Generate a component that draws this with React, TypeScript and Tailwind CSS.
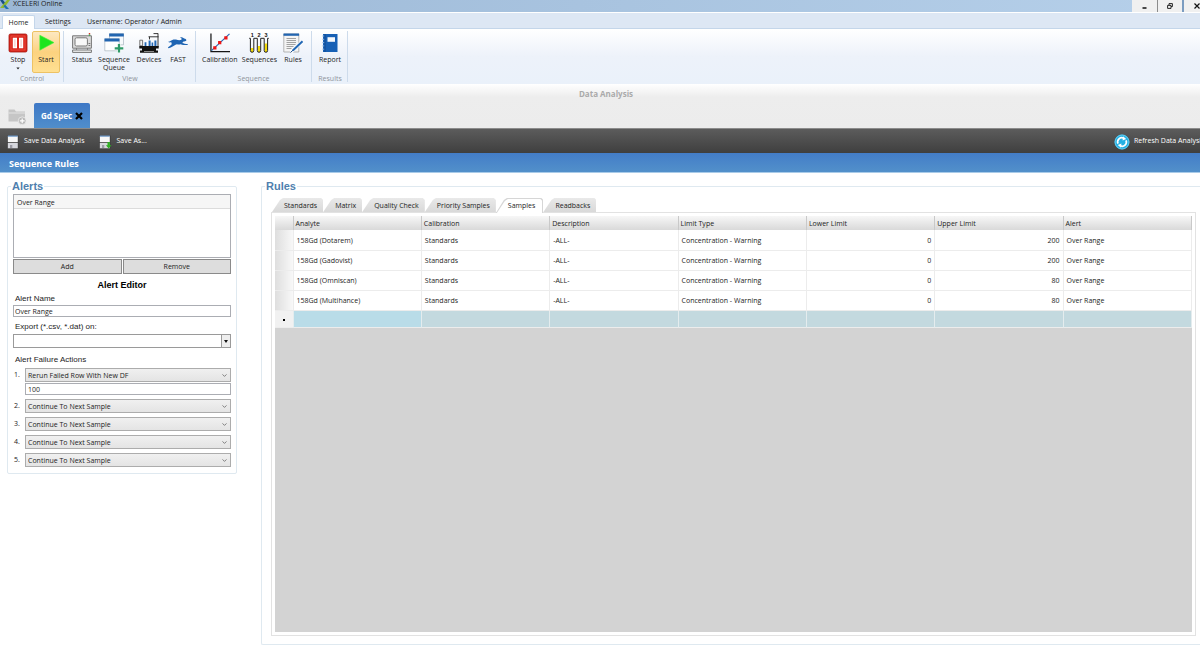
import { type ReactNode } from 'react';
import { clsx } from 'clsx';

const rules = [
  { analyte: '158Gd (Dotarem)', lower: 0, upper: 200 },
  { analyte: '158Gd (Gadovist)', lower: 0, upper: 200 },
  { analyte: '158Gd (Omniscan)', lower: 0, upper: 80 },
  { analyte: '158Gd (Multihance)', lower: 0, upper: 80 },
];

const columns = ['Analyte', 'Calibration', 'Description', 'Limit Type', 'Lower Limit', 'Upper Limit', 'Alert'];

const tabs = ['Standards', 'Matrix', 'Quality Check', 'Priority Samples', 'Samples', 'Readbacks'];

/* ---------- Icons ---------- */

const StopIcon = () => (
  <svg viewBox="0 0 20 20" className="w-5 h-5">
    <rect x="1" y="1" width="18" height="18" rx="1.5" fill="#d9261c" stroke="#a3160f" strokeWidth="0.8" />
    <path d="M3 3h14v14H3z" fill="none" stroke="#ee5346" strokeWidth="0.7" />
    <path d="M4.8 4.8h4.2v10.4H4.8zM11 4.8h4.2v10.4H11z" fill="#fff" />
    <path d="M6.3 6.2h1.2v7.6H6.3zM12.5 6.2h1.2v7.6h-1.2z" fill="#f3cdc9" />
  </svg>
);

const StartIcon = () => (
  <svg viewBox="0 0 20 20" className="w-5 h-5">
    <path d="M3.8 2.2 18 9.6 3.8 17.2Z" fill="#1ee51e" stroke="#4df03f" strokeWidth="0.6" />
  </svg>
);

const StatusIcon = () => (
  <svg viewBox="0 0 20 20" className="w-5 h-5" fill="none" stroke="#777" strokeWidth="1">
    <path d="M0.6 2.8h18.8v12.4H0.6z" fill="#dcdcdc" />
    <rect x="3" y="4.8" width="12.4" height="8.2" rx="1.5" fill="#f8f8f8" />
    <path d="M16.5 12.5h1.8M16.5 10.5h1.8" />
    <path d="M4.5 15.2v1.6M15.5 15.2v1.6M0.6 17h18.8v2.4H0.6z" fill="#eee" />
    <path d="M17.5 0v1.4" stroke="#e03428" strokeWidth="1.4" />
    <path d="M17.5 1.4v1.4" stroke="#35a84a" strokeWidth="1.4" />
  </svg>
);

const QueueIcon = () => (
  <svg viewBox="0 0 20 20" className="w-5 h-5">
    <path d="M5.5 0.8h14v11h-14z" fill="#f6f9fc" stroke="#9aa7b5" strokeWidth="0.6" />
    <path d="M5.2 0.5h14.6v3H5.2z" fill="#2265b0" />
    <path d="M0.8 5.8h14.4v12H0.8z" fill="#fff" stroke="#9aa7b5" strokeWidth="0.6" />
    <path d="M0.5 5.5h15v3h-15z" fill="#2265b0" />
    <path d="M15 11v8.6M10.7 15.3h8.6" stroke="#fff" strokeWidth="3.8" />
    <path d="M15 11v8.6M10.7 15.3h8.6" stroke="#2f9a68" strokeWidth="2.3" />
  </svg>
);

const DevicesIcon = () => (
  <svg viewBox="0 0 20 20" className="w-5 h-5">
    <path d="M0.8 7.2h2.8v5.6H0.8z" fill="#f4f4f4" stroke="#555" strokeWidth="0.8" />
    <path d="M19 14V0.4M9.5 3.8h10M10.5 3.8v2.6M14.5 0.6h4.5" fill="none" stroke="#222" strokeWidth="0.9" />
    <path d="M5.6 9.2h1.8v3.8H5.6zM9.6 7.5h2v5.5h-2zM12.6 9.5h1.6v3.5h-1.6zM15.4 7.5h2v5.5h-2z" fill="#2368b5" />
    <path d="M0.3 13h19.4v2.6H0.3zM3 15.6h14v1.8H3zM1 17.4h18v2.4H1z" fill="#111" />
    <path d="M5 18h10v0.8H5z" fill="#aaa" />
  </svg>
);

const FastIcon = () => (
  <svg viewBox="0 0 20 20" className="w-5 h-5">
    <path
      d="M0 8.8c1 .1 1.7-.1 2.4-.7C4 6.6 6 6.1 8 6.6c1.5.4 3 .8 4.7.5.5-.5.9-.9 1.3-1.2L12 4.3c1.6-.1 3.1.3 4.2 1.3 1.2.1 2 .8 2.2 1.8-.8.8-1.9 1-3 1.1-.3.6-.7 1.1-1.2 1.5 1.6.5 3.2 1 5.6 1 .1.6-.3 1-1 1.1-2.2.1-4.4-.1-6.4-.8-1.2.3-2.3.2-3.5 0-.9.3-1.7.7-2.6 1.1-1.6.8-3.3 2.1-6 2.8l-.3-.9c1.7-1 2.7-2.2 3.9-3.4-.6-.6-.7-1.1-.6-1.8C2.3 9.7 1 9.6 0 8.8Z"
      fill="#1f65b3"
    />
  </svg>
);

const CalibrationIcon = () => (
  <svg viewBox="0 0 21 20" className="w-5 h-5">
    <path d="M1 0v19h20" fill="none" stroke="#151515" strokeWidth="1.3" />
    <path d="M1.5 18 20.5 0.5" stroke="#2368b5" strokeWidth="1.2" />
    <path d="M3.4 13.3h3.4v3.4H3.4zM8.5 8h3.4v3.4H8.5zM15 3h3.4v3.4H15z" fill="#f01616" />
  </svg>
);

const SequencesIcon = () => (
  <svg viewBox="0 0 20 20" className="w-5 h-5">
    <g fontFamily="Liberation Sans, sans-serif" fontWeight="bold" fontSize="5.5" fill="#111" textAnchor="middle">
      <text x="3.2" y="4">1</text>
      <text x="10" y="4">2</text>
      <text x="17" y="4">3</text>
    </g>
    <path d="M1.8 15h2.6v4H1.8zM8.7 13h2.6v6H8.7zM15.6 10.5h2.6V19h-2.6z" fill="#f2d90a" />
    <g fill="none" stroke="#222" strokeWidth="1">
      <path d="M0.2 5.3h1.2v12.3a1.7 1.7 0 0 0 3.4 0V5.3h3.5v12.3a1.7 1.7 0 0 0 3.4 0V5.3h3.5v12.3a1.7 1.7 0 0 0 3.4 0V5.3h1.2" />
    </g>
  </svg>
);

const RulesIcon = () => (
  <svg viewBox="0 0 20 20" className="w-5 h-5">
    <path d="M0.8 1h15v18h-15z" fill="#f4f4f4" stroke="#999" strokeWidth="0.7" />
    <path d="M0.5 0.5h15.6v2.3H0.5z" fill="#2265b0" />
    <path d="M3.5 5.5h9.5M3.5 7.5h9.5M3.5 9.5h9.5M3.5 11.5h9M3.5 13.5h7M3.5 15.5h5" stroke="#999" strokeWidth="0.9" />
    <path d="M19.3 8.5 9.8 17.3 8 19.3" fill="none" stroke="#fff" strokeWidth="3.4" />
    <path d="M19.5 8.3 9.8 17.4" stroke="#2368b5" strokeWidth="2" />
    <path d="M10 17.2 7.6 19.4" stroke="#174a87" strokeWidth="1" />
  </svg>
);

const ReportIcon = () => (
  <svg viewBox="0 0 20 20" className="w-5 h-5">
    <path d="M3 1h14.5v18H3z" fill="#1760b5" />
    <path d="M5 1v18" stroke="#0d417f" strokeWidth="0.7" />
    <path d="M7.5 4.2h7.5v4.6H7.5z" fill="#f5f8fc" />
    <path d="M2.2 3h2M2.2 6.3h2M2.2 9.6h2M2.2 12.9h2M2.2 16.2h2" stroke="#9cc0e8" strokeWidth="0.9" />
  </svg>
);

const FolderAddIcon = () => (
  <svg viewBox="0 0 20 18" className="w-5 h-4.5">
    <path d="M0.5 1.5h6l1.5 2h9v10h-16.5z" fill="#c6c6c6" />
    <path d="M0.5 5h16.5" stroke="#e8e8e8" strokeWidth="0.9" />
    <circle cx="14.2" cy="12.8" r="3.9" fill="#b9b9b9" stroke="#eee" strokeWidth="0.8" />
    <path d="M14.2 10.4v4.8M11.8 12.8h4.8" stroke="#fff" strokeWidth="1.2" />
  </svg>
);

const SaveIcon = ({ withArrow = false }: { withArrow?: boolean }) => (
  <svg viewBox="0 0 13 14" className="w-3.5 h-3.5">
    <path d="M0.5 0.5h11.6v13H1.4L0.5 12.6z" fill="#3d3d3d" />
    <path d="M1.3 0.8h10v6.4h-10z" fill="#f7f7f7" />
    <path d="M1.3 0.6h10v1h-10z" fill="#4b80bd" />
    <path d="M1.3 8h10v5.3h-10z" fill="#d6d7dd" />
    <path d="M3.5 10h2.3v3H3.5z" fill="#9c9ca6" />
    {withArrow && <path d="M9 7h2.4v3.3h1.6L10.2 13.6 7.4 10.3H9z" fill="#2fae23" />}
  </svg>
);

const RefreshIcon = () => (
  <svg viewBox="0 0 16 16" className="w-4 h-4 shrink-0">
    <circle cx="8" cy="8" r="7.5" fill="#25b0e3" />
    <circle cx="8" cy="8" r="7" fill="none" stroke="#7fd8f5" strokeWidth="0.7" />
    <path d="M4 9.6A4.2 4.2 0 0 1 9.8 4.2M12 6.4A4.2 4.2 0 0 1 6.2 11.8" fill="none" stroke="#fff" strokeWidth="1.7" />
    <path d="M9 2.2 12.2 5 8.6 6.4zM7 13.8 3.8 11 7.4 9.6z" fill="#fff" />
  </svg>
);

/* ---------- Ribbon ---------- */

function RibbonButton({ label, icon, className, active }: { label: string; icon: ReactNode; className: string; active?: boolean }) {
  return (
    <button
      className={clsx(
        'flex flex-col items-center gap-[3px] rounded-xs border pt-px leading-2 h-[42px]',
        active ? 'border-[#edc264] bg-linear-to-b from-[#fde8c0] via-[#fcd27f] to-[#ffe092]' : 'border-transparent',
        className,
      )}
    >
      {icon}
      <span>{label}</span>
      {label === 'Stop' && (
        <svg viewBox="0 0 4 3" className="w-1 h-[3px]">
          <path d="M0.4 0.4h3.2L2 2.4z" fill="#222" />
        </svg>
      )}
    </button>
  );
}

function RibbonGroup({ title, className, children }: { title: string; className?: string; children: ReactNode }) {
  return (
    <div className={clsx('flex flex-col justify-between border-r border-[#cddbeb]', className)}>
      <div className="flex">{children}</div>
      <div className="text-center text-[#8f949b] leading-1.5">{title}</div>
    </div>
  );
}

/* ---------- Alerts ---------- */

function ActionSelect({ index, value }: { index: number; value: string }) {
  return (
    <div className="flex items-center">
      <label htmlFor={`action-${index}`} className="w-[11px] shrink-0">{index}.</label>
      <div className="grid flex-1 items-center">
        <select
          id={`action-${index}`}
          className="col-start-1 row-start-1 appearance-none h-3.5 px-0.5 pt-px leading-3 border border-[#acacac] bg-linear-to-b from-[#f0f0f0] to-[#e4e4e4] outline-none"
        >
          <option>{value}</option>
        </select>
        <svg viewBox="0 0 5 3" className="col-start-1 row-start-1 justify-self-end w-[5px] h-[3px] mr-1 pointer-events-none">
          <path d="M0.5 0.4 2.5 2.4 4.5 0.4" fill="none" stroke="#666" strokeWidth="0.8" />
        </svg>
      </div>
    </div>
  );
}

function AlertsPanel() {
  return (
    <fieldset className="w-[230px] shrink-0 self-start rounded-xs border border-[#dfe9f0] px-[5px] pt-0.5 pb-1.5">
      <legend className="-ml-0.5 px-px leading-3 font-['Liberation_Sans',sans-serif] text-[11px] font-bold text-[#4f7fae]">
        Alerts
      </legend>
      <ul className="h-16 border border-[#abadb3] bg-white">
        <li className="h-3.5 pl-[3px] leading-4 border-b border-[#dcdcdc] bg-[#f6f6f6]">Over Range</li>
      </ul>
      <div className="grid grid-cols-2 gap-px mt-px">
        <button className="h-[15px] pt-px leading-3 border border-[#8a8a8a] bg-[#dddddd]">Add</button>
        <button className="h-[15px] pt-px leading-3 border border-[#8a8a8a] bg-[#dddddd]">Remove</button>
      </div>
      <h2 className="mt-[5px] text-center font-['Liberation_Sans',sans-serif] text-[9px] leading-3 font-bold text-black">Alert Editor</h2>
      <label htmlFor="alert-name" className="block mt-0.5 pl-0.5 font-['Liberation_Sans',sans-serif] text-[8px] leading-3">
        Alert Name
      </label>
      <input id="alert-name" defaultValue="Over Range" className="block w-full h-3 px-px pt-px border border-[#abadb3] bg-white outline-none" />
      <label htmlFor="export-on" className="block mt-1 pb-px pl-0.5 font-['Liberation_Sans',sans-serif] text-[8px] leading-3">
        Export (*.csv, *.dat) on:
      </label>
      <div className="grid items-center">
        <select id="export-on" className="col-start-1 row-start-1 appearance-none h-3.5 border border-[#9a9a9a] bg-white outline-none">
          <option></option>
        </select>
        <span className="col-start-1 row-start-1 justify-self-end flex items-center justify-center w-2.5 h-3.5 border border-[#9a9a9a] bg-[#eeeeee] pointer-events-none">
          <svg viewBox="0 0 4 3" className="w-1 h-[3px]">
            <path d="M0 0h4L2 3z" fill="#111" />
          </svg>
        </span>
      </div>
      <h3 className="mt-1.5 pb-0.5 pl-0.5 font-['Liberation_Sans',sans-serif] text-[8px] leading-3">Alert Failure Actions</h3>
      <div className="flex flex-col gap-1 pl-px">
        <div>
          <ActionSelect index={1} value="Rerun Failed Row With New DF" />
          <div className="pl-[11px] pt-px">
            <input aria-label="Dilution factor" defaultValue="100" className="block w-full h-3 px-0.5 pt-px border border-[#abadb3] bg-white outline-none" />
          </div>
        </div>
        {[2, 3, 4, 5].map((n) => (
          <ActionSelect key={n} index={n} value="Continue To Next Sample" />
        ))}
      </div>
    </fieldset>
  );
}

/* ---------- Rules ---------- */

function RuleTab({ label, selected }: { label: string; selected: boolean }) {
  return (
    <button
      role="tab"
      aria-selected={selected}
      className={clsx(
        'relative pl-3 pr-1.5 leading-4 [clip-path:polygon(0_100%,8px_2px,11px_0,calc(100%-2px)_0,100%_2px,100%_100%)]',
        selected ? 'z-10 h-[15px] -mb-px pr-2 bg-[#d6d6d6]' : 'h-3.5 bg-linear-to-b from-[#e9e9e9] to-[#d9d9d9]',
      )}
    >
      {selected && (
        <span className="absolute inset-x-px top-px bottom-0 bg-white [clip-path:polygon(0_100%,8px_2px,11px_0,calc(100%-2px)_0,100%_2px,100%_100%)]" />
      )}
      <span className="relative">{label}</span>
    </button>
  );
}

function RulesPanel() {
  return (
    <fieldset className="flex flex-1 min-w-0 flex-col rounded-l-xs border border-r-0 border-[#dfe9f0] pl-[9px] pr-1 pt-1.5 pb-2">
      <legend className="-ml-1.5 px-px leading-3 font-['Liberation_Sans',sans-serif] text-[11px] font-bold text-[#4f7fae]">
        Rules
      </legend>
      <div role="tablist" className="flex pl-px">
        {tabs.map((tab) => (
          <RuleTab key={tab} label={tab} selected={tab === 'Samples'} />
        ))}
      </div>
      <div className="flex flex-1 flex-col border border-[#e2e2e2] bg-white p-[3px]">
        <div className="flex-1 bg-[#d3d3d3]">
          <table className="w-full table-fixed border-collapse bg-white">
            <thead>
              <tr className="h-3.5 bg-linear-to-b from-[#f7f7f7] to-[#d9d9d9]">
                <th className="w-[18px] border-r border-[#c9c9c9]" aria-label="Row" />
                {columns.map((column) => (
                  <th key={column} className="border-r border-[#c9c9c9] px-0.5 pt-px text-left font-normal leading-3">
                    {column}
                  </th>
                ))}
              </tr>
            </thead>
            <tbody>
              {rules.map((rule) => (
                <tr key={rule.analyte} className="h-5 border-b border-[#ececec] *:border-r *:border-[#ececec] *:px-[3px] *:pt-0.5">
                  <th className="bg-linear-to-r from-[#dedede] to-[#f8f8f8]" aria-label="Select row" />
                  <td>{rule.analyte}</td>
                  <td>Standards</td>
                  <td>-ALL-</td>
                  <td>Concentration - Warning</td>
                  <td className="text-right">{rule.lower}</td>
                  <td className="text-right">{rule.upper}</td>
                  <td>Over Range</td>
                </tr>
              ))}
              {/* Empty row for a new rule */}
              <tr className="h-[17px] border-b border-[#ececec] bg-[#c3d9df] *:border-r *:border-[#e4ecee]">
                <th className="bg-[#f1f1f1]" aria-label="New row">
                  <span className="block mx-auto mt-0.5 size-0.5 bg-black" />
                </th>
                <td className="bg-[#b9dce8]" />
                {columns.slice(1).map((column) => (
                  <td key={column} />
                ))}
              </tr>
            </tbody>
          </table>
        </div>
      </div>
    </fieldset>
  );
}

/* ---------- Page ---------- */

export default function App() {
  return (
    <div className="flex min-h-screen flex-col overflow-hidden whitespace-nowrap bg-white font-['Open_Sans','Noto_Sans',sans-serif] text-[7px] text-[#1c1c1c]">
      {/* Title bar */}
      <header className="flex h-3 bg-linear-to-r from-[#9bb7d5] to-[#b6d0ea]">
        <svg viewBox="0 0 11 9" className="w-[11px] h-[9px]">
          <path d="M0 0h3l3 4-2 2z" fill="#174f86" />
          <path d="M10 0H7L0 8h4z" fill="#8fb82f" />
          <path d="M5 4.5 9 9H6L3.5 6.2z" fill="#1f6fb0" />
        </svg>
        <h1 className="pl-0.5 text-[7px] leading-2">XCELERI Online</h1>
        <div className="ml-auto flex w-[68px] shrink-0 overflow-hidden bg-[#f0f0f0]">
          <button aria-label="Minimize" className="flex w-[26px] shrink-0 items-center justify-center border-r border-[#8c8c8c]">
            <svg viewBox="0 0 5 6" className="w-[5px] h-1.5"><path d="M0.5 5h4" stroke="#111" strokeWidth="1.5" /></svg>
          </button>
          <button aria-label="Restore" className="flex w-[26px] shrink-0 items-center justify-center border-r-2 border-[#7b9cc0]">
            <svg viewBox="0 0 6 6" className="w-1.5 h-1.5" fill="none" stroke="#111" strokeWidth="0.9">
              <path d="M2 2V0.6h3.4v3H4M0.6 2.4H4v3H0.6z" />
            </svg>
          </button>
          <button aria-label="Close" className="flex w-6 shrink-0 items-center pl-2.5">
            <svg viewBox="0 0 6 6" className="w-1.5 h-1.5"><path d="M0.5 0.5l5 5M5.5 0.5l-5 5" stroke="#111" strokeWidth="1.2" /></svg>
          </button>
        </div>
      </header>

      {/* Ribbon tabs */}
      <nav className="flex h-[17px] items-end border-t border-b border-t-white border-b-[#c4d6ea] bg-[#dde7f4] leading-3">
        <button className="-mb-px ml-0.5 h-3.5 w-[33px] rounded-t-xs border border-b-0 border-[#c4d6ea] bg-white">Home</button>
        <button className="ml-2.5">Settings</button>
        <button className="ml-4">Username: Operator / Admin</button>
      </nav>

      {/* Ribbon */}
      <div className="flex h-[55px] bg-linear-to-b from-white via-[#edf2fa] to-[#eaf1fa] pt-0.5 pb-0.5">
        <RibbonGroup title="Control" className="w-16 pl-1 pr-[3px]">
          <RibbonButton label="Stop" icon={<StopIcon />} className="w-7" />
          <RibbonButton label="Start" icon={<StartIcon />} className="w-7" active />
        </RibbonGroup>
        <RibbonGroup title="View" className="w-[132px] pl-[5px] pr-1">
          <RibbonButton label="Status" icon={<StatusIcon />} className="w-[26px]" />
          <RibbonButton label="Sequence Queue" icon={<QueueIcon />} className="w-[38px] whitespace-normal" />
          <RibbonButton label="Devices" icon={<DevicesIcon />} className="w-8" />
          <RibbonButton label="FAST" icon={<FastIcon />} className="w-[26px]" />
        </RibbonGroup>
        <RibbonGroup title="Sequence" className="w-[116px] pl-1 pr-1">
          <RibbonButton label="Calibration" icon={<CalibrationIcon />} className="w-10" />
          <RibbonButton label="Sequences" icon={<SequencesIcon />} className="w-10" />
          <RibbonButton label="Rules" icon={<RulesIcon />} className="w-7" />
        </RibbonGroup>
        <RibbonGroup title="Results" className="w-9 pl-px">
          <RibbonButton label="Report" icon={<ReportIcon />} className="w-[34px]" />
        </RibbonGroup>
      </div>

      {/* Document tabs */}
      <section className="flex h-11 flex-col justify-between bg-linear-to-b from-white via-[#ededed] via-30% to-[#ececec]">
        <h2 className="pl-3 pt-1 text-center text-[8px] leading-3 font-bold text-[#aaaaaa]">Data Analysis</h2>
        <div className="flex items-end">
          <button aria-label="Add analysis" className="ml-2 mb-0.5"><FolderAddIcon /></button>
          <button className="-mt-1 ml-1.5 flex h-[25px] w-14 items-center justify-center gap-[3px] rounded-t-xs bg-linear-to-b from-[#3e78c6] to-[#508ecb] text-[8px] font-bold text-white">
            Gd Spec
            <svg viewBox="0 0 8 8" className="w-2 h-2"><path d="M1 1l6 6M7 1l-6 6" stroke="#000" strokeWidth="2.2" /></svg>
          </button>
        </div>
      </section>

      {/* Toolbar */}
      <div className="flex h-[25px] items-center border-t border-[#8b8b8b] bg-linear-to-b from-[#5c5c5c] to-[#3f3f3f] pt-px text-white">
        <button className="ml-1.5 flex items-center gap-1"><SaveIcon />Save Data Analysis</button>
        <button className="ml-3.5 flex items-center gap-1"><SaveIcon withArrow />Save As...</button>
        <button className="ml-auto flex w-[86px] shrink-0 items-center gap-1 overflow-hidden"><RefreshIcon />Refresh Data Analysis</button>
      </div>
      <div className="h-5 border-b border-[#a9cbe8] bg-linear-to-b from-[#437dc8] to-[#5290ca] pl-[9px] text-[9px] leading-[22px] font-bold text-white">
        Sequence Rules
      </div>

      <main className="flex flex-1 gap-6 pl-[7px] pt-[7px] pb-[5px]">
        <AlertsPanel />
        <RulesPanel />
      </main>
    </div>
  );
}
